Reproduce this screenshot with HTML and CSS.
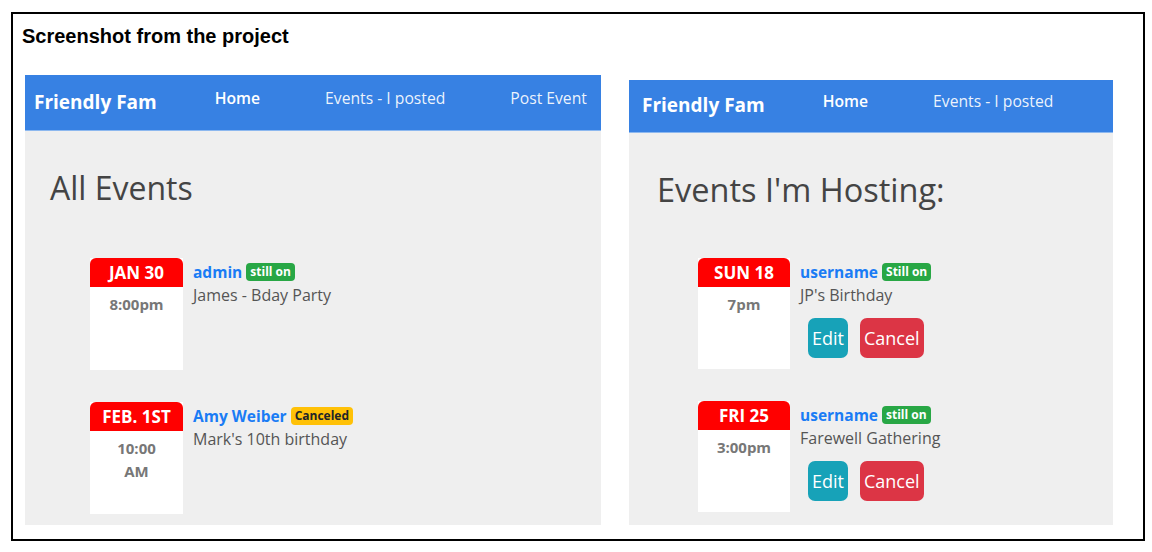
FILE: index.html
```html
<!DOCTYPE html>
<html lang="en">
<head>
<meta charset="utf-8">
<title>Screenshot from the project</title>
<link rel="stylesheet" href="styles.css">
</head>
<body>
<div class="frame">
  <h2 class="title">Screenshot from the project</h2>
  <div class="shots">
    <section class="panel panel-left">
      <nav class="navbar navbar-left">
        <span class="brand">Friendly Fam</span>
        <a class="nav-link active">Home</a>
        <a class="nav-link">Events - I posted</a>
        <a class="nav-link">Post Event</a>
      </nav>
      <div class="content">
        <h1 class="heading">All Events</h1>
        <div class="events events-left">
          <div class="event">
            <div class="date-box">
              <div class="date-head">JAN 30</div>
              <div class="date-time">8:00pm</div>
            </div>
            <div class="info">
              <div class="name-row"><span class="name">admin</span><span class="badge badge-green">still on</span></div>
              <div class="desc">James - Bday Party</div>
            </div>
          </div>
          <div class="event">
            <div class="date-box">
              <div class="date-head">FEB. 1ST</div>
              <div class="date-time">10:00 AM</div>
            </div>
            <div class="info">
              <div class="name-row"><span class="name">Amy Weiber</span><span class="badge badge-yellow">Canceled</span></div>
              <div class="desc">Mark's 10th birthday</div>
            </div>
          </div>
        </div>
      </div>
    </section>
    <section class="panel panel-right">
      <nav class="navbar navbar-right">
        <span class="brand">Friendly Fam</span>
        <a class="nav-link active">Home</a>
        <a class="nav-link">Events - I posted</a>
      </nav>
      <div class="content content-right">
        <h1 class="heading heading-right">Events I'm Hosting:</h1>
        <div class="events events-right">
          <div class="event">
            <div class="date-box date-box-sm">
              <div class="date-head">SUN 18</div>
              <div class="date-time">7pm</div>
            </div>
            <div class="info">
              <div class="name-row"><span class="name">username</span><span class="badge badge-green">Still on</span></div>
              <div class="desc">JP's Birthday</div>
              <div class="actions"><button class="btn btn-edit">Edit</button><button class="btn btn-cancel">Cancel</button></div>
            </div>
          </div>
          <div class="event">
            <div class="date-box date-box-sm">
              <div class="date-head">FRI 25</div>
              <div class="date-time">3:00pm</div>
            </div>
            <div class="info">
              <div class="name-row"><span class="name">username</span><span class="badge badge-green">still on</span></div>
              <div class="desc">Farewell Gathering</div>
              <div class="actions"><button class="btn btn-edit">Edit</button><button class="btn btn-cancel">Cancel</button></div>
            </div>
          </div>
        </div>
      </div>
    </section>
  </div>
</div>
</body>
</html>
```
FILE: styles.css
```css
body {
  margin: 0;
  background: #fff;
  font-family: "Open Sans", "Noto Sans", sans-serif;
}

.frame {
  margin: 12px 0 0 11px;
  width: 1134px;
  height: 529px;
  box-sizing: border-box;
  border: 2px solid #000;
}

.title {
  margin: 0;
  padding: 10px 0 0 9px;
  font: bold 20px/24px "Liberation Sans", Arial, sans-serif;
  color: #000;
}

.shots {
  display: flex;
  align-items: flex-end;
  gap: 28px;
  margin-top: 27px;
  padding-left: 12px;
}

.panel {
  background: #efefef;
  flex: none;
}

.panel-left {
  width: 576px;
  height: 450px;
}

.panel-right {
  width: 484px;
  height: 445px;
}

.navbar {
  display: flex;
  align-items: flex-start;
  box-sizing: border-box;
  background: #3781e3;
  border-bottom: 1px solid #8db8ef;
  white-space: nowrap;
}

.navbar-left {
  height: 56px;
  padding: 2px 0 0 9px;
}

.navbar-right {
  height: 53px;
  padding: 0 0 0 13px;
}

.brand {
  flex: none;
  padding-top: 12px;
  margin-right: 58px;
  font-size: 19px;
  line-height: 26px;
  font-weight: 700;
  color: #fff;
}

.nav-link {
  flex: none;
  padding-top: 10px;
  font-size: 15.7px;
  line-height: 22px;
  color: rgba(255, 255, 255, 0.92);
}

.nav-link + .nav-link {
  margin-left: 65px;
}

.nav-link.active {
  font-weight: 600;
  color: #fff;
}

.content {
  padding: 37px 0 0 25px;
}

.content-right {
  padding-left: 28px;
}

.heading {
  margin: 0;
  font-size: 32px;
  line-height: 40px;
  font-weight: 400;
  color: #444;
  white-space: nowrap;
}

.heading-right {
  font-size: 32.5px;
}

.events-left {
  margin-top: 50px;
  padding-left: 40px;
}

.events-right {
  margin-top: 48px;
  padding-left: 41px;
}

.event {
  display: flex;
  gap: 10px;
  margin-bottom: 32px;
}

.date-box {
  width: 93px;
  height: 112px;
  background: #fff;
  flex: none;
}

.date-box-sm {
  width: 92px;
  height: 111px;
}

.date-head {
  height: 29px;
  line-height: 29px;
  background: #ff0000;
  border-radius: 6px 6px 0 0;
  color: #fff;
  font-size: 17px;
  font-weight: 700;
  text-align: center;
}

.date-time {
  padding: 6px 15px 0;
  font-size: 15px;
  line-height: 23px;
  font-weight: 700;
  color: #777;
  text-align: center;
}

.info {
  padding-top: 1px;
}

.name-row {
  display: flex;
  align-items: center;
  gap: 4px;
  height: 25px;
  white-space: nowrap;
}

.name {
  font-size: 15.5px;
  font-weight: 700;
  color: #1a7cf5;
}

.badge {
  height: 18px;
  line-height: 18px;
  padding: 0 4px;
  border-radius: 4px;
  font-size: 12px;
  font-weight: 700;
}

.badge-green {
  background: #28a745;
  color: #fff;
}

.badge-yellow {
  background: #ffc107;
  color: #212529;
}

.desc {
  font-size: 16px;
  line-height: 22px;
  color: #555;
  white-space: nowrap;
}

.actions {
  display: flex;
  gap: 12px;
  margin: 12px 0 0 8px;
}

.btn {
  height: 40px;
  padding: 0 4px;
  border: none;
  border-radius: 7px;
  font-family: "Open Sans", "Noto Sans", sans-serif;
  font-size: 18px;
  line-height: 40px;
  color: #fff;
}

.btn-edit {
  background: #17a2b8;
}

.btn-cancel {
  background: #dc3545;
}
```
